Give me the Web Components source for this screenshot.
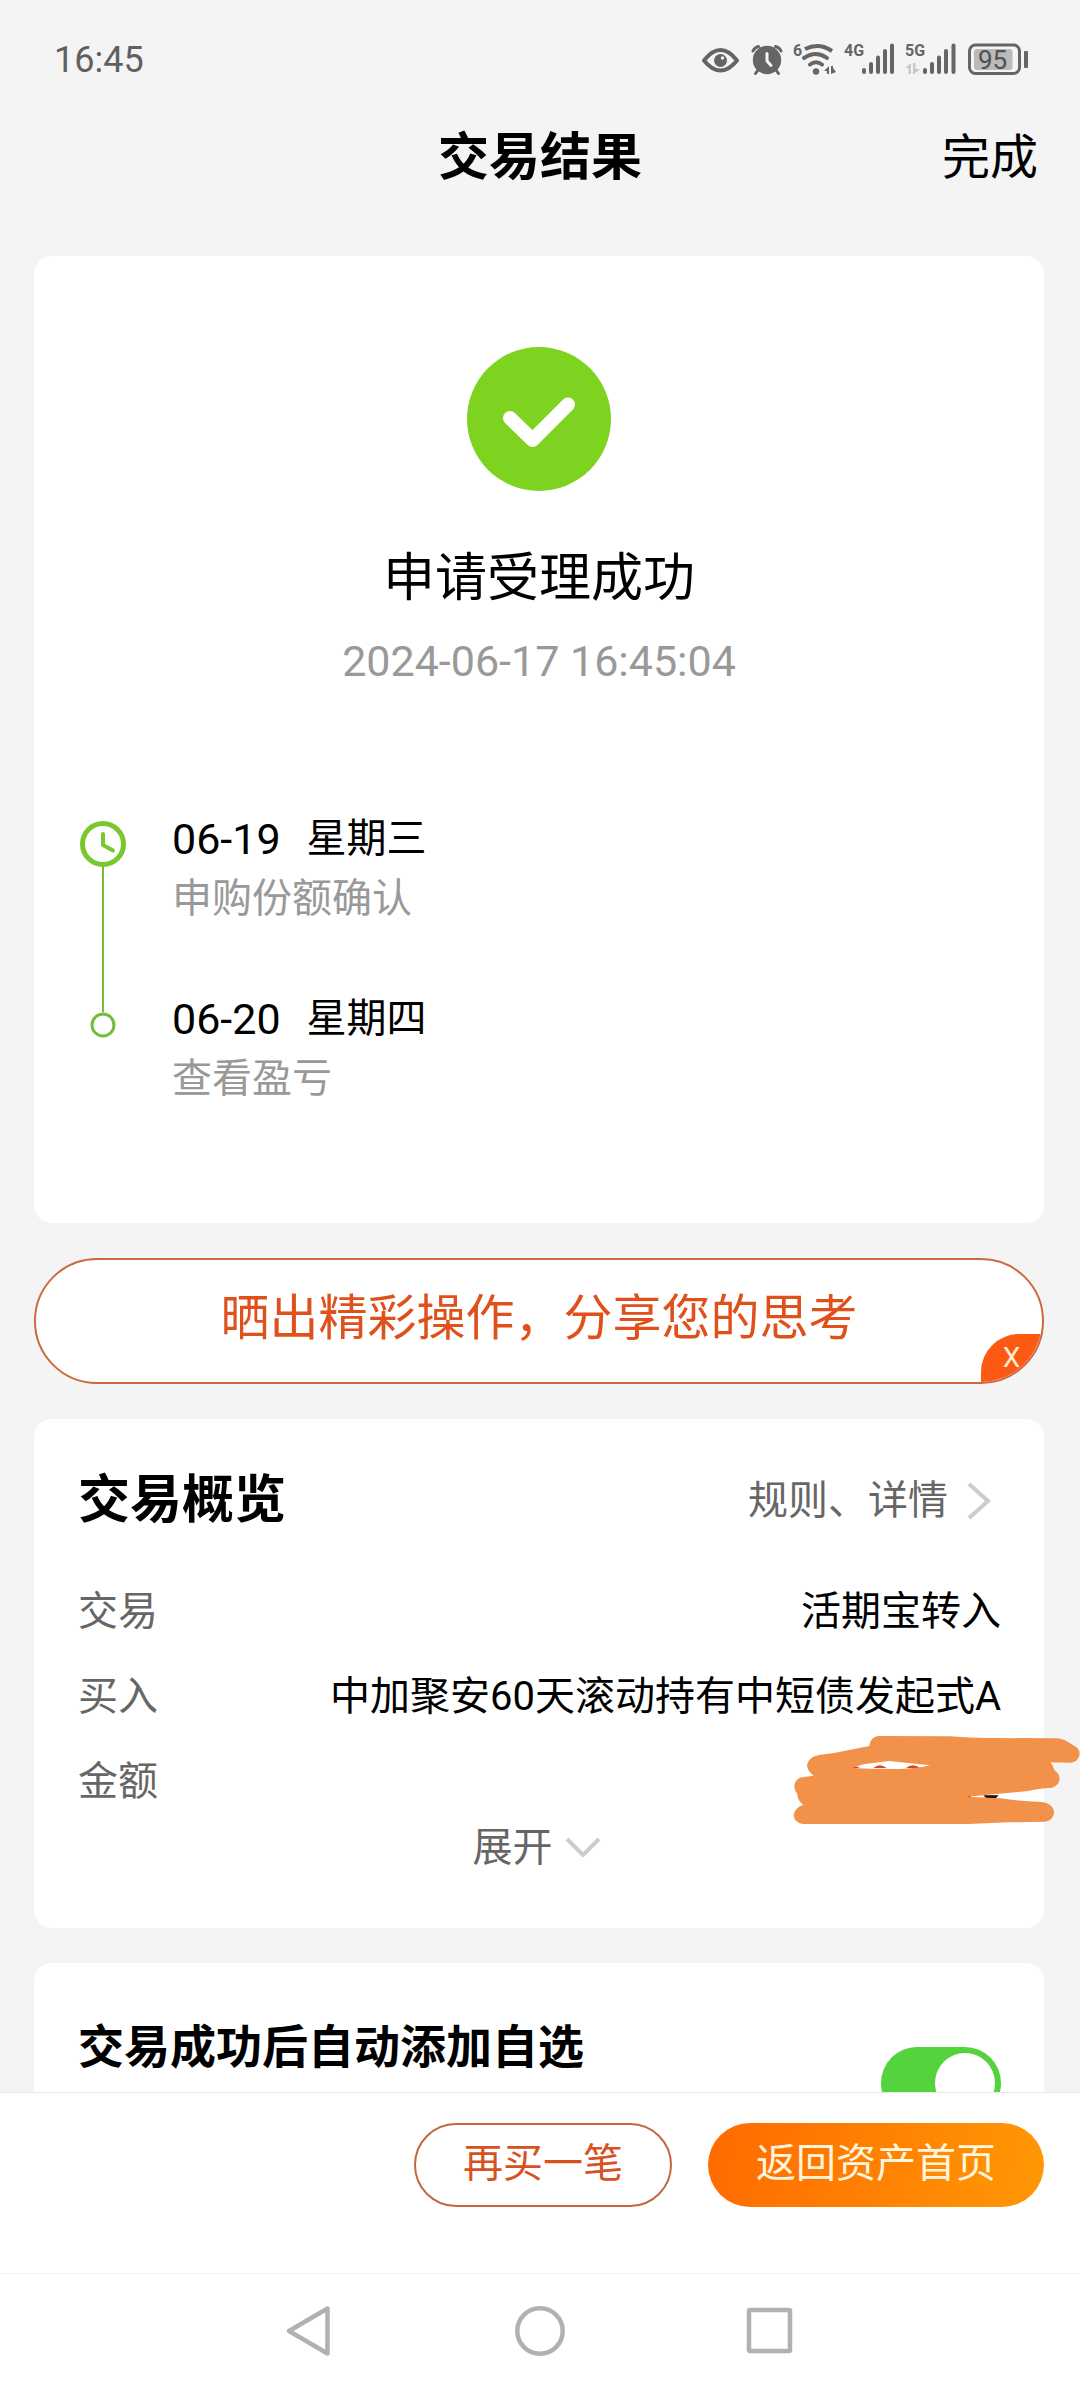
<!DOCTYPE html>
<html lang="zh-CN">
<head>
<meta charset="utf-8">
<meta name="viewport" content="width=device-width, initial-scale=1">
<title>交易结果</title>
<style>
    body {
        margin: 0;
        background-color: #f4f4f4;
        color: #000;
        font-family: Roboto, "Noto Sans CJK SC", sans-serif;
        font-size: 40px;
        line-height: 60px;
    }
</style>
</head>
<body>
<result-page></result-page>

<script>
class BaseElement extends HTMLElement {
    constructor() {
        super();
        this.shadowDOM = this.attachShadow({mode: "open"});
    }

    connectedCallback() {
        this.render();
    }
}

class StatusBar extends BaseElement {
    render() {
        this.shadowDOM.innerHTML = `
        <style>
        :host {
            display: flex;
            justify-content: space-between;
            align-items: center;
            height: 120px;
            padding: 0 50px 0 54px;
            color: #606060;
        }

        time {
            font-size: 36px;
        }

        svg {
            display: block;
            fill: #656565;
        }

        .line {
            fill: none;
            stroke: #656565;
            stroke-linecap: round;
            stroke-linejoin: round;
        }

        .net {
            font: bold 16px Roboto, sans-serif;
        }

        .level {
            font: 26px Roboto, sans-serif;
            fill: #505050;
        }
        </style>

        <time>16:45</time>
        <svg width="330" height="40" viewBox="0 0 330 40" role="img" aria-label="状态">
            <path class="line" stroke-width="4" d="M4 20.500Q12 10 20.500 10T37 20.500Q29 30.500 20.500 30.500T4 20.500Z"/>
            <circle cx="20.500" cy="20.500" r="6.500"/>
            <circle cx="22.500" cy="18" r="1.700" fill="#f4f4f4"/>

            <circle cx="67" cy="20" r="14.200"/>
            <path class="line" stroke-width="3" d="M53 11Q54.500 7.500 58.500 6.500M81 11Q79.500 7.500 75.500 6.500M58 30L55.500 33.500M76 30L78.500 33.500"/>
            <path d="M67 13.500V21L71 25.500" fill="none" stroke="#f4f4f4" stroke-width="3" stroke-linecap="round"/>

            <text class="net" x="93" y="16">6</text>
            <g class="line" stroke-width="4">
                <path d="M105 9Q119 2 132 11" stroke-linecap="butt"/>
                <path d="M104 18Q116 10 127 18"/>
                <path d="M110 24.500Q116 20 122 24.500"/>
            </g>
            <circle cx="116" cy="31.500" r="3.200"/>
            <path d="M124 31L129 26V34H127V31ZM131 26H133V28L136 32L131 34Z"/>

            <text class="net" x="144" y="16">4G</text>
            <g class="line" stroke-width="4">
                <path d="M164 30V32M171 24V32M178 17.500V32M185 11V32M192 5.500V32"/>
            </g>

            <text class="net" x="205" y="16">5G</text>
            <path fill="#c8c8c8" d="M205 28L211 23V34H208.500V28ZM213 23H215.500V29H220L214 34H213Z"/>
            <g class="line" stroke-width="4">
                <path d="M225 30V32M232 24V32M239 17.500V32M246 11V32M253.500 5.500V32"/>
            </g>

            <rect class="line" stroke-width="3" x="269.500" y="5" width="50" height="28.500" rx="6"/>
            <rect x="274" y="9" width="38.500" height="21" rx="3" fill="#bababa"/>
            <text class="level" x="278" y="29">95</text>
            <rect x="324" y="11" width="4" height="17" rx="1"/>
        </svg>
        `
    }
}

class TitleBar extends BaseElement {
    render() {
        this.shadowDOM.innerHTML = `
        <style>
        :host {
            display: grid;
            grid-template-columns: 1fr auto 1fr;
            align-items: center;
            height: 76px;
            padding: 0 42px;
            margin-bottom: 60px;
        }

        h1 {
            grid-column: 2;
            margin: 0;
            font-size: 51px;
            font-weight: bold;
        }

        button {
            justify-self: end;
            padding: 0;
            border: 0;
            background: none;
            color: inherit;
            font: inherit;
            font-size: 48px;
            cursor: pointer;
        }
        </style>

        <h1><slot></slot></h1>
        <button type="button">完成</button>
        `
    }
}

class PageCard extends BaseElement {
    render() {
        this.shadowDOM.innerHTML = `
        <style>
        :host {
            display: block;
            border-radius: 18px;
            background-color: white;
        }
        </style>

        <slot></slot>
        `
    }
}

class ResultStatus extends BaseElement {
    render() {
        this.shadowDOM.innerHTML = `
        <style>
        :host {
            display: flex;
            flex-direction: column;
            align-items: center;
            padding-top: 91px;
        }

        svg {
            display: block;
        }

        h2 {
            margin: 48px 0 0;
            font-size: 52px;
            font-weight: normal;
            line-height: 80px;
        }

        time {
            color: #999;
            font-size: 43px;
            line-height: 84px;
        }
        </style>

        <svg width="144" height="144" viewBox="0 0 144 144" aria-hidden="true">
            <circle cx="72" cy="72" r="72" fill="#7ed321"/>
            <path d="M43 71L65.500 93L101 57.500" fill="none" stroke="white" stroke-width="14" stroke-linecap="round" stroke-linejoin="round"/>
        </svg>
        <h2><slot></slot></h2>
        <time>${this.getAttribute('time')}</time>
        `
    }
}

class TimelineItem extends BaseElement {
    render() {
        const last = this.hasAttribute('last');
        const clock = `
            <svg width="46" height="46" viewBox="0 0 46 46" fill="none" stroke="#7ac72e">
                <circle cx="23" cy="23" r="20.500" stroke-width="5"/>
                <path d="M23 13V24L33 29.500" stroke-width="4" stroke-linecap="round" stroke-linejoin="round"/>
            </svg>
            <i></i>`;
        const dot = `
            <i></i>
            <svg width="26" height="26" viewBox="0 0 26 26" fill="none" stroke="#74bd3a">
                <circle cx="13" cy="13" r="11" stroke-width="3"/>
            </svg>`;

        this.shadowDOM.innerHTML = `
        <style>
        :host {
            display: grid;
            grid-template-columns: 46px 1fr;
            column-gap: 46px;
        }

        .marker {
            display: flex;
            flex-direction: column;
            align-items: center;
            padding-top: ${last ? 0 : 12}px;
        }

        .marker > svg {
            display: block;
        }

        .marker > i {
            width: 2px;
            background-color: #74bd3a;
            flex: ${last ? '0 0 23px' : '1'};
        }

        .text {
            padding-bottom: ${last ? 0 : 60}px;
        }

        p {
            margin: 0;
        }

        .day {
            display: flex;
            align-items: center;
            gap: 26px;
        }

        time {
            font-size: 43px;
        }

        .note {
            color: #999;
        }
        </style>

        <div class="marker">${last ? dot : clock}</div>
        <div class="text">
            <p class="day"><time>${this.getAttribute('date')}</time><span>${this.getAttribute('weekday')}</span></p>
            <p class="note"><slot></slot></p>
        </div>
        `
    }
}

class ShareBanner extends BaseElement {
    render() {
        this.shadowDOM.innerHTML = `
        <style>
        :host {
            display: block;
            position: relative;
            overflow: hidden;
            box-sizing: border-box;
            height: 126px;
            border: 2px solid #cb6a3f;
            border-radius: 63px;
            background-color: white;
        }

        button {
            border: 0;
            cursor: pointer;
            font: inherit;
        }

        .share {
            display: block;
            width: 100%;
            height: 100%;
            padding: 0 0 4px;
            background: none;
            color: #e0501a;
            font-size: 49px;
        }

        .close {
            position: absolute;
            right: 0;
            bottom: 0;
            width: 61px;
            height: 48px;
            padding: 0;
            border-radius: 38px 0 0 0;
            background-color: #fc5a14;
            color: #ffeccf;
            font-size: 28px;
            line-height: 48px;
        }
        </style>

        <button class="share" type="button"><slot></slot></button>
        <button class="close" type="button" aria-label="X">X</button>
        `
    }
}

class TradeSummary extends BaseElement {
    render() {
        this.shadowDOM.innerHTML = `
        <style>
        :host {
            display: block;
            padding: 42px 43px 56px 44px;
        }

        header {
            display: flex;
            justify-content: space-between;
            align-items: center;
            height: 80px;
            margin-bottom: 28px;
        }

        h2 {
            margin: 0;
            font-size: 52px;
            font-weight: bold;
        }

        a {
            display: flex;
            align-items: center;
            gap: 18px;
            padding-right: 9px;
            color: #666;
            text-decoration: none;
        }

        svg {
            display: block;
        }

        dl {
            margin: 0;
        }

        .expand {
            display: flex;
            align-items: center;
            gap: 12px;
            height: 48px;
            margin: 0 auto;
            padding: 0;
            border: 0;
            background: none;
            color: #666;
            font: inherit;
            cursor: pointer;
        }
        </style>

        <header>
            <h2>交易概览</h2>
            <a href="#detail">规则、详情
                <svg width="26" height="40" viewBox="0 0 26 40" fill="none" stroke="#ccc" stroke-width="4"><path d="M3 3L22 20L3 37"/></svg>
            </a>
        </header>
        <slot></slot>
        <button class="expand" type="button">展开
            <svg width="42" height="24" viewBox="0 0 42 24" fill="none" stroke="#ccc" stroke-width="4"><path d="M2 3L18 19L34 3"/></svg>
        </button>
        `
    }
}

class SummaryRow extends BaseElement {
    render() {
        this.shadowDOM.innerHTML = `
        <style>
        :host {
            display: flex;
            justify-content: space-between;
            align-items: center;
            position: relative;
            height: 85px;
        }

        .label {
            color: #666;
        }
        </style>

        <span class="label">${this.getAttribute('label')}</span>
        <slot></slot>
        `
    }
}

class HiddenAmount extends BaseElement {
    render() {
        this.shadowDOM.innerHTML = `
        <style>
        :host {
            position: absolute;
            right: -79px;
            top: -4px;
        }

        svg {
            display: block;
        }
        </style>

        <svg width="290" height="90" viewBox="270 885 870 270" role="img" aria-label="金额">
            <path d="M455 984Q465 974 480 984ZM520 984Q539 968 560 984ZM618 984Q638 968 660 984Z" fill="#d8481a"/>
            <path d="M850 1066H896L888 1074H858ZM796 1070L812 1066V1072Z" fill="#1c0a00"/>
            <path fill="#f2914a" fill-rule="evenodd" d="
                M535 888L750 889Q820 895 880 894L1070 895Q1092 896 1118 915Q1139 924 1139 941Q1137 966 1110 968L1052 967Q1060 980 1063 990Q1078 1000 1079 1017Q1077 1037 1056 1043
                Q1010 1046 985 1053L800 1070L902 1075Q960 1084 1025 1086Q1062 1092 1062 1119Q1059 1142 1035 1145L925 1147L805 1152H308Q283 1148 281 1126Q282 1105 310 1094
                Q292 1082 292 1061Q283 1052 283 1036Q288 1012 312 1011L341 1007Q321 992 321 975Q325 950 358 945L402 939L508 918Q511 891 535 888Z
                M455 984L490 973L568 963L690 976L655 983L600 987L510 986Z"/>
        </svg>
        `
    }
}

class ToggleRow extends BaseElement {
    render() {
        this.shadowDOM.innerHTML = `
        <style>
        :host {
            display: flex;
            justify-content: space-between;
            align-items: flex-start;
            padding: 44px 43px 60px 44px;
        }

        label {
            font-size: 46px;
            font-weight: bold;
            line-height: 80px;
        }

        input {
            appearance: none;
            flex: none;
            width: 120px;
            height: 72px;
            margin: 40px 0 0;
            padding: 6px;
            box-sizing: border-box;
            border-radius: 36px;
            background-color: #ddd;
            cursor: pointer;
        }

        input::before {
            content: "";
            display: block;
            width: 60px;
            height: 60px;
            border-radius: 50%;
            background-color: white;
        }

        input:checked {
            background-color: #54d33c;
        }

        input:checked::before {
            margin-left: auto;
        }
        </style>

        <label for="toggleElement"><slot></slot></label>
        <input id="toggleElement" type="checkbox" checked>
        `
    }
}

class ActionBar extends BaseElement {
    render() {
        this.shadowDOM.innerHTML = `
        <style>
        :host {
            display: flex;
            justify-content: flex-end;
            gap: 36px;
            padding: 30px 36px 66px;
            border-top: 1px solid #e6e6e6;
            background-color: white;
        }

        button {
            height: 84px;
            padding: 0 48px 2px;
            border: 0;
            border-radius: 42px;
            font: inherit;
            cursor: pointer;
        }

        .again {
            padding: 0 47px 2px;
            border: 2px solid #c4673f;
            background-color: white;
            color: #d8521f;
        }

        .home {
            background: linear-gradient(100deg, #ff6a00, #ff9804);
            color: #fff5dd;
        }
        </style>

        <button class="again" type="button">再买一笔</button>
        <button class="home" type="button">返回资产首页</button>
        `
    }
}

class SystemNav extends BaseElement {
    render() {
        this.shadowDOM.innerHTML = `
        <style>
        :host {
            display: flex;
            justify-content: center;
            height: 114px;
            border-top: 1px solid #f2f2f2;
            background-color: white;
        }

        button {
            display: flex;
            justify-content: center;
            align-items: center;
            width: 230px;
            padding: 0;
            border: 0;
            background: none;
            cursor: pointer;
        }

        svg {
            fill: none;
            stroke: #b1b1b1;
            stroke-width: 4.500;
            stroke-linejoin: round;
        }
        </style>

        <button type="button" aria-label="返回"><svg width="52" height="52" viewBox="0 0 52 52"><path d="M43.500 3.500V48.500L5 26Z"/></svg></button>
        <button type="button" aria-label="主页"><svg width="52" height="52" viewBox="0 0 52 52"><circle cx="26" cy="26" r="22.700"/></svg></button>
        <button type="button" aria-label="最近任务"><svg width="52" height="52" viewBox="0 0 52 52"><rect x="5" y="5" width="41" height="41" rx="1"/></svg></button>
        `
    }
}

class ResultPage extends BaseElement {
    render() {
        this.shadowDOM.innerHTML = `
        <style>
        :host {
            display: flex;
            flex-direction: column;
            height: 100vh;
        }

        main {
            flex: 1;
            min-height: 0;
            display: flex;
            flex-direction: column;
            gap: 35px;
            padding: 0 36px 0 34px;
            overflow: hidden auto;
            scrollbar-width: none;
        }

        main > * {
            flex: none;
        }

        .timeline {
            padding: 106px 46px 114px;
        }
        </style>

        <status-bar></status-bar>
        <title-bar>交易结果</title-bar>
        <main>
            <page-card>
                <result-status time="2024-06-17 16:45:04">申请受理成功</result-status>
                <div class="timeline">
                    <timeline-item date="06-19" weekday="星期三">申购份额确认</timeline-item>
                    <timeline-item date="06-20" weekday="星期四" last>查看盈亏</timeline-item>
                </div>
            </page-card>
            <share-banner>晒出精彩操作，分享您的思考</share-banner>
            <page-card>
                <trade-summary>
                    <summary-row label="交易">活期宝转入</summary-row>
                    <summary-row label="买入">中加聚安60天滚动持有中短债发起式A</summary-row>
                    <summary-row label="金额"><hidden-amount></hidden-amount></summary-row>
                </trade-summary>
            </page-card>
            <page-card>
                <toggle-row>交易成功后自动添加自选</toggle-row>
            </page-card>
        </main>
        <action-bar></action-bar>
        <system-nav></system-nav>
        `
    }
}

customElements.define('status-bar', StatusBar)
customElements.define('title-bar', TitleBar)
customElements.define('page-card', PageCard)
customElements.define('result-status', ResultStatus)
customElements.define('timeline-item', TimelineItem)
customElements.define('share-banner', ShareBanner)
customElements.define('trade-summary', TradeSummary)
customElements.define('summary-row', SummaryRow)
customElements.define('hidden-amount', HiddenAmount)
customElements.define('toggle-row', ToggleRow)
customElements.define('action-bar', ActionBar)
customElements.define('system-nav', SystemNav)
customElements.define('result-page', ResultPage)
</script>
</body>
</html>
